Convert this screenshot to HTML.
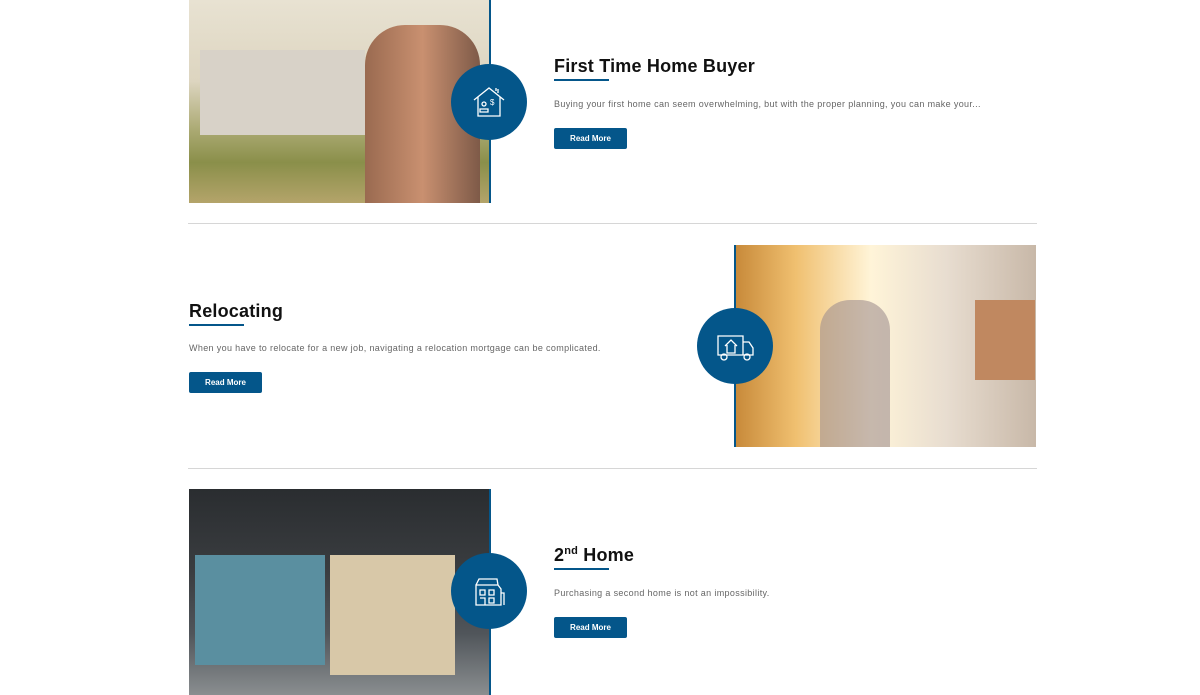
<!DOCTYPE html>
<html><head><meta charset="utf-8"><style>
body{margin:0;width:1200px;height:695px;background:#fff;position:relative;overflow:hidden;font-family:"Liberation Sans",sans-serif}
.a{position:absolute}
.img{position:absolute;width:300px}
.vl{position:absolute;width:2px;background:#04568a}
.c{position:absolute;width:76px;height:76px;border-radius:50%;background:#04568a;display:flex;align-items:center;justify-content:center}
h2{position:absolute;margin:0;font-size:18px;font-weight:bold;color:#111;letter-spacing:0.2px;line-height:22px}
h2:after{content:"";position:absolute;left:0;bottom:-4px;width:55px;height:2px;background:#04568a}
sup{font-size:11px;line-height:0;vertical-align:7px}
p{position:absolute;margin:0;font-size:9px;color:#666;letter-spacing:0.35px;white-space:nowrap}
.b{position:absolute;width:73px;height:21px;background:#04568a;border-radius:2px;color:#fff;font-size:8px;font-weight:bold;text-align:center;line-height:21px}
.hr{position:absolute;left:188px;width:849px;height:1px;background:#d6d6d6}
</style></head><body>
<div class="img" style="left:189px;top:0;height:203px;background:linear-gradient(180deg,#e8e2d2 0%,#ddd5c0 40%,#a9a870 65%,#8a8f4a 80%,#b4a46a 100%)"></div>
<div class="a" style="left:200px;top:50px;width:165px;height:85px;background:#d8d2c8"></div>
<div class="a" style="left:365px;top:25px;width:115px;height:178px;background:linear-gradient(90deg,#9a6a50,#c99070 50%,#7e5a48);border-radius:40px 40px 0 0"></div>
<div class="vl" style="left:489px;top:0;height:203px"></div>
<div class="c" style="left:451px;top:64px"><svg width="36" height="36" viewBox="0 0 36 36" fill="none" stroke="#fff" stroke-width="1.3"><path d="M3 16 L18 4 L33 16 M7 13 V32 H29 V13 M25 7 V4 M27 9 V5"/><circle cx="13" cy="20" r="2"/><path d="M9 28 v-3 h8 v3 z"/><text x="19" y="21" font-size="8" fill="#fff" stroke="none" font-family="Liberation Sans">$</text></svg></div>
<h2 style="left:554px;top:55px">First Time Home Buyer</h2>
<p style="left:554px;top:99px">Buying your first home can seem overwhelming, but with the proper planning, you can make your...</p>
<div class="b" style="left:554px;top:128px">Read More</div>
<div class="hr" style="top:223px"></div>
<div class="img" style="left:736px;top:245px;height:202px;background:linear-gradient(90deg,#c88a3a 0%,#f0c070 20%,#fff4d8 45%,#e8ddd0 70%,#c8b8a8 100%)"></div>
<div class="a" style="left:820px;top:300px;width:70px;height:147px;background:#a09090;border-radius:30px 30px 0 0;opacity:.6"></div>
<div class="a" style="left:975px;top:300px;width:60px;height:80px;background:#c08860"></div>
<div class="vl" style="left:734px;top:245px;height:202px"></div>
<div class="c" style="left:697px;top:308px"><svg width="40" height="36" viewBox="0 0 40 36" fill="none" stroke="#fff" stroke-width="1.3"><path d="M3 8 H28 V27 H3 Z M28 14 H34 L38 20 V27 H28"/><path d="M10 18 L16 12 L22 18 M12 17 V25 H20 V17"/><circle cx="9" cy="29" r="3"/><circle cx="32" cy="29" r="3"/></svg></div>
<h2 style="left:189px;top:300px">Relocating</h2>
<p style="left:189px;top:343px">When you have to relocate for a new job, navigating a relocation mortgage can be complicated.</p>
<div class="b" style="left:189px;top:372px">Read More</div>
<div class="hr" style="top:468px"></div>
<div class="img" style="left:189px;top:489px;height:206px;background:linear-gradient(180deg,#2a2d30 0%,#3a3d40 40%,#50555a 70%,#8a8e90 100%)"></div>
<div class="a" style="left:195px;top:555px;width:130px;height:110px;background:#5a8fa0"></div>
<div class="a" style="left:330px;top:555px;width:125px;height:120px;background:#d8c8a8"></div>
<div class="vl" style="left:489px;top:489px;height:206px"></div>
<div class="c" style="left:451px;top:553px"><svg width="36" height="36" viewBox="0 0 36 36" fill="none" stroke="#fff" stroke-width="1.3"><path d="M5 12 H27 L30 16 V32 H5 Z M5 12 L8 6 H26 L27 12"/><path d="M9 17 h5 v5 h-5z M18 17 h5 v5 h-5z M9 25 h5 v7 M18 25 h5 v5 h-5z M30 20 h3 v12"/></svg></div>
<h2 style="left:554px;top:544px">2<sup>nd</sup> Home</h2>
<p style="left:554px;top:588px">Purchasing a second home is not an impossibility.</p>
<div class="b" style="left:554px;top:617px">Read More</div>
</body></html>
